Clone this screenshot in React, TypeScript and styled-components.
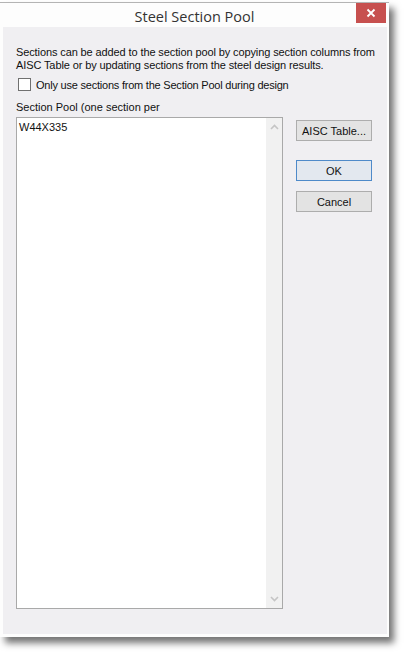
import styled, { createGlobalStyle } from "styled-components";

const GlobalStyle = createGlobalStyle`
    html, body {
        margin: 0;
        padding: 0;
        background: #ffffff;
    }
`;

const Page = styled.div`
    padding-top: 2px;
    width: 405px;
    height: 650px;
`;

const Window = styled.div`
    width: 389px;
    height: 635px;
    display: flex;
    flex-direction: column;
    background: #fdfdfd;
    border-top: 1px solid #b4b4b4;
    box-sizing: border-box;
    box-shadow: 5px 6px 7px rgba(0, 0, 0, 0.55);
`;

const TitleBar = styled.div`
    height: 24px;
    display: flex;
    align-items: center;
    justify-content: center;
    position: relative;
    flex-shrink: 0;
`;

const Title = styled.div`
    font-family: "Open Sans", "Noto Sans", sans-serif;
    font-size: 14.5px;
    color: #333333;
    padding-top: 2px;
`;

const CloseButton = styled.div`
    position: absolute;
    top: 0;
    right: 3px;
    width: 30px;
    height: 20px;
    background: #c7504f;
    display: flex;
    align-items: center;
    justify-content: center;
`;

const Client = styled.div`
    flex: 1;
    margin: 0 2px 3px 3px;
    background: #f0eff2;
    padding: 19px 13px 0 13px;
    display: flex;
    flex-direction: column;
    font-family: "Liberation Sans", Arial, sans-serif;
    font-size: 11px;
    color: #111111;
`;

const Intro = styled.div`
    line-height: 13px;
    letter-spacing: -0.11px;
    white-space: nowrap;
`;

const CheckRow = styled.label`
    display: flex;
    align-items: center;
    gap: 5px;
    margin-top: 6px;
    padding-left: 2px;
    letter-spacing: -0.22px;
    white-space: nowrap;
`;

const CheckBox = styled.span`
    width: 11px;
    height: 11px;
    border: 1px solid #707070;
    background: #ffffff;
`;

const Body = styled.div`
    display: flex;
    gap: 13px;
    margin-top: 10px;
`;

const ListColumn = styled.div`
    display: flex;
    flex-direction: column;
    gap: 4px;
`;

const ListBox = styled.div`
    width: 267px;
    height: 492px;
    box-sizing: border-box;
    border: 1px solid #a9a9a9;
    background: #ffffff;
    display: flex;
`;

const ListText = styled.div`
    flex: 1;
    padding: 3px 0 0 2px;
`;

const ScrollBar = styled.div`
    width: 16px;
    background: #f1f1f1;
    display: flex;
    flex-direction: column;
    justify-content: space-between;
    align-items: center;
    padding: 6px 0;
`;

const ButtonColumn = styled.div`
    display: flex;
    flex-direction: column;
    padding-top: 19px;
`;

const Button = styled.div<{ $default?: boolean; $gap?: number }>`
    width: 76px;
    height: 21px;
    box-sizing: border-box;
    margin-top: ${(p) => p.$gap ?? 0}px;
    border: 1px solid ${(p) => (p.$default ? "#4f8ac9" : "#adadad")};
    background: ${(p) => (p.$default ? "#e3e8ef" : "#e3e3e3")};
    display: flex;
    align-items: center;
    justify-content: center;
`;

const Arrow = ({ up }: { up?: boolean }) => (
    <svg width="9" height="6" viewBox="0 0 9 6">
        <path
            d={up ? "M1 5 L4.5 1.5 L8 5" : "M1 1 L4.5 4.5 L8 1"}
            stroke="#c5c5c5"
            strokeWidth="1.6"
            fill="none"
        />
    </svg>
);

export default function App() {
    return (
        <Page>
            <GlobalStyle />
            <Window>
                <TitleBar>
                    <Title>Steel Section Pool</Title>
                    <CloseButton>
                        <svg width="10" height="10" viewBox="0 0 10 10">
                            <path d="M1.5 1.5 L8.5 8.5 M8.5 1.5 L1.5 8.5" stroke="#ffffff" strokeWidth="1.8" />
                        </svg>
                    </CloseButton>
                </TitleBar>
                <Client>
                    <Intro>
                        Sections can be added to the section pool by copying section columns from
                        <br />
                        AISC Table or by updating sections from the steel design results.
                    </Intro>
                    <CheckRow>
                        <CheckBox />
                        Only use sections from the Section Pool during design
                    </CheckRow>
                    <Body>
                        <ListColumn>
                            <div>Section Pool (one section per</div>
                            <ListBox>
                                <ListText>W44X335</ListText>
                                <ScrollBar>
                                    <Arrow up />
                                    <Arrow />
                                </ScrollBar>
                            </ListBox>
                        </ListColumn>
                        <ButtonColumn>
                            <Button>AISC Table...</Button>
                            <Button $default $gap={19}>OK</Button>
                            <Button $gap={10}>Cancel</Button>
                        </ButtonColumn>
                    </Body>
                </Client>
            </Window>
        </Page>
    );
}
